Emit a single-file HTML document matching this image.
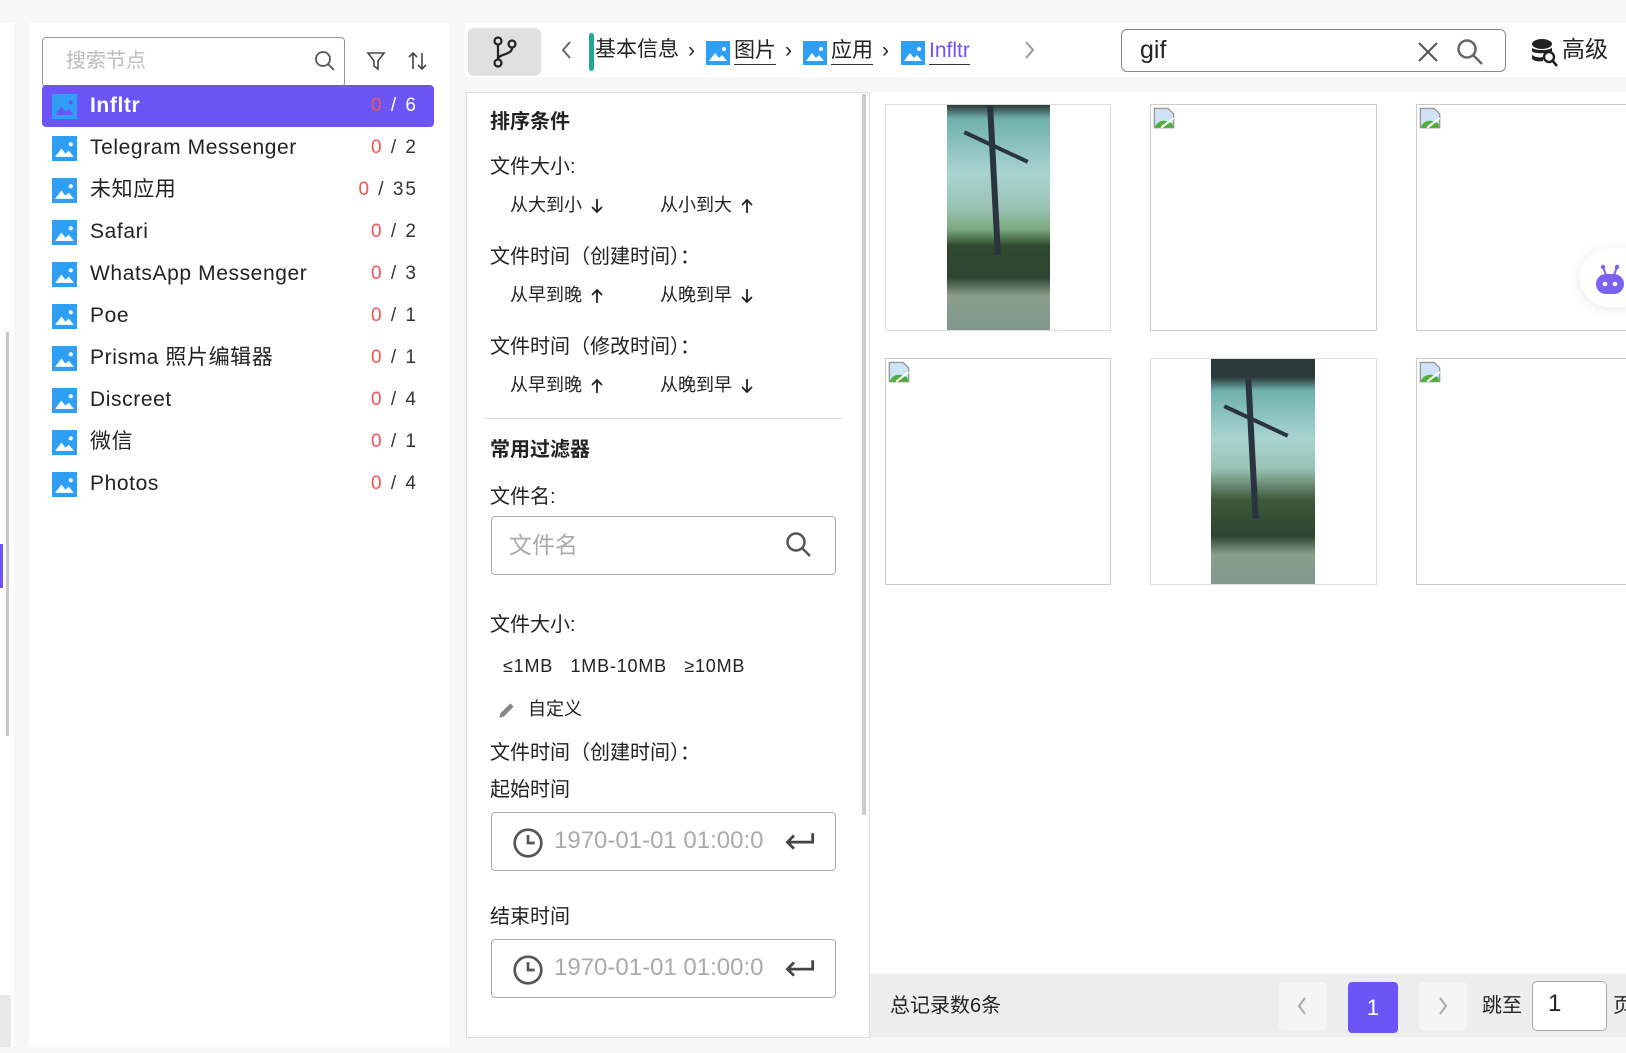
<!DOCTYPE html>
<html><head><meta charset="utf-8">
<style>
*{box-sizing:border-box;margin:0;padding:0}
body{width:1626px;height:1053px;background:#f7f7f7;font-family:"Liberation Sans","Noto Sans CJK SC",sans-serif;color:#222;position:relative;overflow:hidden}
.a{position:absolute}
.t{position:absolute;white-space:nowrap;line-height:1.2}
.row{position:absolute;left:42px;width:392px;height:42px}
.row .ic{position:absolute;left:10px;top:9px}
.row .nm{position:absolute;left:48px;top:7px;font-size:21px;line-height:28px;letter-spacing:.6px;color:#222}
.row .ct{position:absolute;right:16px;top:8px;font-size:19px;line-height:26px;color:#333;letter-spacing:2px}
.row .ct b{font-weight:normal;color:#f55353}
.f{font-size:20px;color:#222}
.s{font-size:18px;color:#222}
.inp{position:absolute;border:1px solid #aaa;border-radius:4px;background:#fff}
.cell{position:absolute;border:1px solid #ddd;background:#fff;overflow:hidden}
.brk{position:absolute;left:2px;top:2px}
.ar{display:inline-block;vertical-align:middle;margin-left:8px}
</style></head><body>
<svg width="0" height="0" style="position:absolute"><defs>
<symbol id="pic" viewBox="0 0 24 24"><rect width="24" height="24" fill="#2f9ff5"/><path d="M3 20 L9 12 L13 17 L16 14 L21 20 Z" fill="#fff"/><circle cx="18" cy="8" r="2" fill="#fff"/></symbol>
<symbol id="pic2" viewBox="0 0 24 24"><rect width="24" height="24" fill="#2f9ff5"/><path d="M3 20 L9 12 L13 17 L16 14 L21 20 Z" fill="#6c55f6"/><circle cx="18" cy="8" r="2" fill="#6c55f6"/></symbol>
<symbol id="brk" viewBox="0 0 16 16"><path d="M1 1h10l4 4v10H1z" fill="#cfe3f7" stroke="#999"/><path d="M1 15 C4 9 9 9 14 12 L15 15Z" fill="#4caf3a"/><path d="M6 15 L15 8" stroke="#fff" stroke-width="1.5"/></symbol>
<symbol id="clock" viewBox="0 0 24 24"><circle cx="12" cy="12" r="10" fill="none" stroke="#555" stroke-width="2"/><path d="M12 6v6h5" fill="none" stroke="#555" stroke-width="2"/></symbol>
<symbol id="enter" viewBox="0 0 30 20"><path d="M27 3v8H4M10 5L4 11l6 6" fill="none" stroke="#444" stroke-width="2.5"/></symbol>
<symbol id="dn" viewBox="0 0 14 16"><path d="M7 1v13M2 9l5 5 5-5" fill="none" stroke="#222" stroke-width="1.8"/></symbol>
<symbol id="up" viewBox="0 0 14 16"><path d="M7 15V2M2 7l5-5 5 5" fill="none" stroke="#222" stroke-width="1.8"/></symbol>
</defs></svg>

<div class="a" style="left:0;top:23px;width:14px;height:1024px;background:#fff"></div>
<div class="a" style="left:6px;top:332px;width:3px;height:404px;background:#c8c8c8"></div>
<div class="a" style="left:0;top:544px;width:3px;height:44px;background:#6c55f6"></div>
<div class="a" style="left:0;top:995px;width:11px;height:52px;background:#e8e8e8"></div>

<div class="a" style="left:29px;top:23px;width:420px;height:1024px;background:#fff"></div>
<div class="inp" style="left:42px;top:37px;width:303px;height:50px;border-color:#999"></div>
<div class="t" style="left:66px;top:49px;font-size:20px;color:#bbb">搜索节点</div>
<svg class="a" style="left:314px;top:50px" width="22" height="22" viewBox="0 0 22 22"><circle cx="9" cy="9" r="7" fill="none" stroke="#555" stroke-width="1.8"/><path d="M14 14l6 6" stroke="#555" stroke-width="1.8"/></svg>
<svg class="a" style="left:366px;top:51px" width="20" height="20" viewBox="0 0 20 20"><path d="M2 2h16l-6 8v8l-4-3v-5z" fill="none" stroke="#444" stroke-width="1.6"/></svg>
<svg class="a" style="left:407px;top:51px" width="22" height="20" viewBox="0 0 22 20"><path d="M6 18V2M2 6l4-4 4 4M15 2v16M11 14l4 4 4-4" fill="none" stroke="#444" stroke-width="1.6"/></svg>

<div class="row" style="top:85px;background:#6c55f6;border-radius:4px"><svg class="ic" width="25" height="25"><use href="#pic2"/></svg><span class="nm" style="color:#fff;font-weight:bold">Infltr</span><span class="ct" style="color:#fff"><b>0</b> / 6</span></div>
<div class="row" style="top:127px"><svg class="ic" width="25" height="25"><use href="#pic"/></svg><span class="nm">Telegram Messenger</span><span class="ct"><b>0</b> / 2</span></div>
<div class="row" style="top:169px"><svg class="ic" width="25" height="25"><use href="#pic"/></svg><span class="nm">未知应用</span><span class="ct"><b>0</b> / 35</span></div>
<div class="row" style="top:211px"><svg class="ic" width="25" height="25"><use href="#pic"/></svg><span class="nm">Safari</span><span class="ct"><b>0</b> / 2</span></div>
<div class="row" style="top:253px"><svg class="ic" width="25" height="25"><use href="#pic"/></svg><span class="nm">WhatsApp Messenger</span><span class="ct"><b>0</b> / 3</span></div>
<div class="row" style="top:295px"><svg class="ic" width="25" height="25"><use href="#pic"/></svg><span class="nm">Poe</span><span class="ct"><b>0</b> / 1</span></div>
<div class="row" style="top:337px"><svg class="ic" width="25" height="25"><use href="#pic"/></svg><span class="nm">Prisma 照片编辑器</span><span class="ct"><b>0</b> / 1</span></div>
<div class="row" style="top:379px"><svg class="ic" width="25" height="25"><use href="#pic"/></svg><span class="nm">Discreet</span><span class="ct"><b>0</b> / 4</span></div>
<div class="row" style="top:421px"><svg class="ic" width="25" height="25"><use href="#pic"/></svg><span class="nm">微信</span><span class="ct"><b>0</b> / 1</span></div>
<div class="row" style="top:463px"><svg class="ic" width="25" height="25"><use href="#pic"/></svg><span class="nm">Photos</span><span class="ct"><b>0</b> / 4</span></div>

<div class="a" style="left:465px;top:23px;width:1161px;height:54px;background:#fff"></div>
<div class="a" style="left:468px;top:28px;width:73px;height:48px;background:#e0e0e0;border-radius:6px"></div>
<svg class="a" style="left:492px;top:35px" width="26" height="34" viewBox="0 0 26 34"><circle cx="6" cy="6" r="3.5" fill="none" stroke="#222" stroke-width="2.2"/><circle cx="6" cy="28" r="3.5" fill="none" stroke="#222" stroke-width="2.2"/><circle cx="20" cy="9" r="3.5" fill="none" stroke="#222" stroke-width="2.2"/><path d="M6 10v14M20 13c0 7-14 6-14 11" fill="none" stroke="#222" stroke-width="2.2"/></svg>
<svg class="a" style="left:560px;top:40px" width="12" height="20" viewBox="0 0 12 20"><path d="M10 2L3 10l7 8" fill="none" stroke="#666" stroke-width="2"/></svg>
<div class="a" style="left:589px;top:33px;width:5px;height:38px;background:#26a69a;border-radius:3px"></div>
<div class="t" style="left:595px;top:37px;font-size:21px;color:#222">基本信息</div>
<div class="t" style="left:688px;top:38px;font-size:21px">›</div>
<svg class="a" style="left:706px;top:41px" width="24" height="24"><use href="#pic"/></svg>
<div class="t" style="left:734px;top:37px;font-size:21px;border-bottom:1px solid #333;line-height:27px">图片</div>
<div class="t" style="left:785px;top:38px;font-size:21px">›</div>
<svg class="a" style="left:803px;top:41px" width="24" height="24"><use href="#pic"/></svg>
<div class="t" style="left:831px;top:37px;font-size:21px;border-bottom:1px solid #333;line-height:27px">应用</div>
<div class="t" style="left:882px;top:38px;font-size:21px">›</div>
<svg class="a" style="left:901px;top:41px" width="24" height="24"><use href="#pic"/></svg>
<div class="t" style="left:929px;top:37px;font-size:21px;color:#6c55f6;border-bottom:1px solid #333;line-height:27px">Infltr</div>
<svg class="a" style="left:1024px;top:40px" width="12" height="20" viewBox="0 0 12 20"><path d="M2 2l7 8-7 8" fill="none" stroke="#999" stroke-width="2"/></svg>

<div class="inp" style="left:1121px;top:29px;width:385px;height:43px;border-color:#888;border-radius:6px"></div>
<div class="t" style="left:1140px;top:35px;font-size:25px;color:#222">gif</div>
<svg class="a" style="left:1417px;top:41px" width="22" height="22" viewBox="0 0 22 22"><path d="M2 2l18 18M20 2L2 20" stroke="#555" stroke-width="2"/></svg>
<svg class="a" style="left:1456px;top:38px" width="28" height="28" viewBox="0 0 28 28"><circle cx="11" cy="11" r="8.5" fill="none" stroke="#666" stroke-width="2.5"/><path d="M17 17l9 9" stroke="#666" stroke-width="2.5"/></svg>
<svg class="a" style="left:1531px;top:38px" width="28" height="30" viewBox="0 0 28 30"><ellipse cx="11" cy="6" rx="10" ry="5" fill="#222"/><path d="M1 9c0 4 20 4 20 0v4c0 3-20 3-20 0zM1 16c0 3 8 4 11 3v4c-4 1-11 0-11-3z" fill="#222"/><circle cx="18" cy="19" r="5" fill="#fff" stroke="#222" stroke-width="2.4"/><path d="M21 22l5 6" stroke="#222" stroke-width="2.6"/></svg>
<div class="t" style="left:1562px;top:36px;font-size:23px;color:#222">高级</div>

<div class="a" style="left:466px;top:92px;width:404px;height:946px;background:#fff;border:1px solid #ddd"></div>
<div class="a" style="left:862px;top:94px;width:4px;height:721px;background:#ccc"></div>
<div class="t" style="left:490px;top:110px;font-size:20px;font-weight:bold">排序条件</div>
<div class="t f" style="left:490px;top:155px">文件大小:</div>
<div class="t s" style="left:510px;top:195px">从大到小<svg class="ar" width="14" height="16"><use href="#dn"/></svg></div>
<div class="t s" style="left:660px;top:195px">从小到大<svg class="ar" width="14" height="16"><use href="#up"/></svg></div>
<div class="t f" style="left:490px;top:245px">文件时间（创建时间）：</div>
<div class="t s" style="left:510px;top:285px">从早到晚<svg class="ar" width="14" height="16"><use href="#up"/></svg></div>
<div class="t s" style="left:660px;top:285px">从晚到早<svg class="ar" width="14" height="16"><use href="#dn"/></svg></div>
<div class="t f" style="left:490px;top:335px">文件时间（修改时间）：</div>
<div class="t s" style="left:510px;top:375px">从早到晚<svg class="ar" width="14" height="16"><use href="#up"/></svg></div>
<div class="t s" style="left:660px;top:375px">从晚到早<svg class="ar" width="14" height="16"><use href="#dn"/></svg></div>
<div class="a" style="left:485px;top:418px;width:357px;height:1px;background:#ddd"></div>
<div class="t" style="left:490px;top:438px;font-size:20px;font-weight:bold">常用过滤器</div>
<div class="t f" style="left:490px;top:485px">文件名:</div>
<div class="inp" style="left:491px;top:516px;width:345px;height:59px"></div>
<div class="t" style="left:509px;top:532px;font-size:23px;color:#aaa">文件名</div>
<svg class="a" style="left:785px;top:531px" width="28" height="28" viewBox="0 0 28 28"><circle cx="11" cy="11" r="8.5" fill="none" stroke="#555" stroke-width="2.5"/><path d="M17 17l8 8" stroke="#555" stroke-width="2.5"/></svg>
<div class="t f" style="left:490px;top:613px">文件大小:</div>
<div class="t s" style="left:503px;top:656px;letter-spacing:.8px">≤1MB&nbsp;&nbsp;&nbsp;1MB-10MB&nbsp;&nbsp;&nbsp;≥10MB</div>
<svg class="a" style="left:496px;top:699px" width="22" height="22" viewBox="0 0 20 20"><path d="M3 17l1-4 9-9 3 3-9 9z" fill="#888"/></svg>
<div class="t s" style="left:528px;top:699px">自定义</div>
<div class="t f" style="left:490px;top:741px">文件时间（创建时间）：</div>
<div class="t f" style="left:490px;top:778px">起始时间</div>
<div class="inp" style="left:491px;top:812px;width:345px;height:59px"></div>
<svg class="a" style="left:512px;top:827px" width="32" height="32"><use href="#clock"/></svg>
<div class="t" style="left:554px;top:827px;font-size:24px;color:#aaa">1970-01-01 01:00:0</div>
<svg class="a" style="left:783px;top:830px" width="33" height="22"><use href="#enter"/></svg>
<div class="t f" style="left:490px;top:905px">结束时间</div>
<div class="inp" style="left:491px;top:939px;width:345px;height:59px"></div>
<svg class="a" style="left:512px;top:954px" width="32" height="32"><use href="#clock"/></svg>
<div class="t" style="left:554px;top:954px;font-size:24px;color:#aaa">1970-01-01 01:00:0</div>
<svg class="a" style="left:783px;top:957px" width="33" height="22"><use href="#enter"/></svg>

<div class="a" style="left:870px;top:92px;width:756px;height:882px;background:#fff"></div>
<div class="cell" style="left:885px;top:104px;width:226px;height:227px">
 <div class="a" style="left:61px;top:0;width:103px;height:227px;background:linear-gradient(180deg,#2b3a3a 0,#6fb0ac 6%,#a9d4d0 30%,#9ac3b5 45%,#7aa77a 55%,#2f4a30 62%,#2c4430 76%,#8a9f8a 84%,#7f978f 100%)"></div>
 <div class="a" style="left:105px;top:0;width:6px;height:150px;background:#2a3340;transform:rotate(-3deg)"></div>
 <div class="a" style="left:75px;top:40px;width:70px;height:4px;background:#2a3340;transform:rotate(25deg)"></div>
</div>
<div class="cell" style="left:1150px;top:104px;width:227px;height:227px;border-color:#ccc"><svg class="brk" width="22" height="22"><use href="#brk"/></svg></div>
<div class="cell" style="left:1416px;top:104px;width:227px;height:227px;border-color:#ccc"><svg class="brk" width="22" height="22"><use href="#brk"/></svg></div>
<div class="cell" style="left:885px;top:358px;width:226px;height:227px;border-color:#ccc"><svg class="brk" width="22" height="22"><use href="#brk"/></svg></div>
<div class="cell" style="left:1150px;top:358px;width:227px;height:227px">
 <div class="a" style="left:60px;top:0;width:104px;height:227px;background:linear-gradient(180deg,#2b3a3a 0,#2b3a3a 8%,#6fb0ac 14%,#a9d4d0 35%,#9ac3b5 48%,#3e5a3a 62%,#2c4430 78%,#8a9f8a 86%,#7f978f 100%)"></div>
 <div class="a" style="left:98px;top:20px;width:6px;height:140px;background:#2a3340;transform:rotate(-3deg)"></div>
 <div class="a" style="left:70px;top:60px;width:70px;height:4px;background:#2a3340;transform:rotate(25deg)"></div>
</div>
<div class="cell" style="left:1416px;top:358px;width:227px;height:227px;border-color:#ccc"><svg class="brk" width="22" height="22"><use href="#brk"/></svg></div>

<div class="a" style="left:1580px;top:248px;width:70px;height:59px;background:#fff;border-radius:30px;box-shadow:0 2px 12px rgba(0,0,0,.1)"></div>
<svg class="a" style="left:1595px;top:264px" width="30" height="34" viewBox="0 0 30 34"><circle cx="8" cy="3" r="2.2" fill="#7b61f0"/><circle cx="22" cy="3" r="2.2" fill="#7b61f0"/><path d="M8 3l3 8M22 3l-3 8" stroke="#7b61f0" stroke-width="2"/><rect x="1" y="10" width="28" height="20" rx="10" fill="#7b61f0"/><circle cx="10" cy="20" r="2.3" fill="#fff"/><circle cx="20" cy="20" r="2.3" fill="#fff"/></svg>

<div class="a" style="left:870px;top:974px;width:756px;height:63px;background:#ededed"></div>
<div class="t" style="left:890px;top:994px;font-size:20px;color:#222">总记录数6条</div>
<div class="a" style="left:1279px;top:982px;width:48px;height:48px;background:#f5f5f5;border-radius:4px"></div>
<svg class="a" style="left:1296px;top:996px" width="12" height="20" viewBox="0 0 12 20"><path d="M9 2L3 10l6 8" fill="none" stroke="#aaa" stroke-width="2"/></svg>
<div class="a" style="left:1348px;top:982px;width:50px;height:51px;background:#6c55f6;border-radius:4px;color:#fff;font-size:22px;text-align:center;line-height:51px">1</div>
<div class="a" style="left:1419px;top:982px;width:48px;height:48px;background:#f5f5f5;border-radius:4px"></div>
<svg class="a" style="left:1437px;top:996px" width="12" height="20" viewBox="0 0 12 20"><path d="M3 2l6 8-6 8" fill="none" stroke="#aaa" stroke-width="2"/></svg>
<div class="t" style="left:1482px;top:994px;font-size:20px">跳至</div>
<div class="inp" style="left:1532px;top:981px;width:75px;height:50px;border-color:#aaa;border-radius:5px"></div>
<div class="t" style="left:1548px;top:990px;font-size:24px">1</div>
<div class="t" style="left:1613px;top:994px;font-size:20px">页</div>
</body></html>
